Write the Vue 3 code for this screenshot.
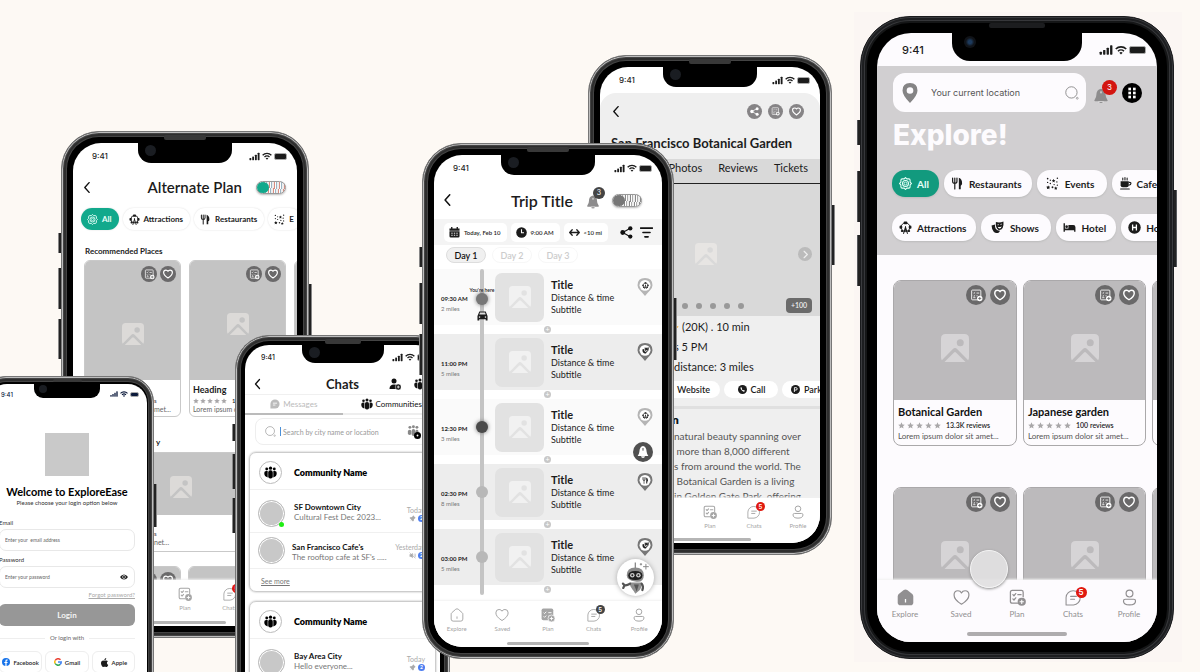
<script setup>
import { h } from 'vue'

const Icon = (props) =>
  h('svg', { viewBox: '0 0 24 24', 'aria-hidden': 'true' }, [h('use', { href: '#i-' + props.name })])
Icon.props = ['name']

const phones = [
  { id: 'alternate', nav: 'none', tone: 'red' },
  { id: 'chats' },
  { id: 'login' },
  { id: 'garden', nav: 'none', tone: 'red' },
  { id: 'trip', nav: 'Plan', tone: 'dark' },
  { id: 'explore', nav: 'Explore', tone: 'red' }
]

const navItems = [
  { label: 'Explore', icon: 'home' },
  { label: 'Saved', icon: 'heart' },
  { label: 'Plan', icon: 'plan' },
  { label: 'Chats', icon: 'chat', count: 5 },
  { label: 'Profile', icon: 'profile' }
]

const exploreChips = [
  [
    { label: 'All', icon: 'target', on: true },
    { label: 'Restaurants', icon: 'fork' },
    { label: 'Events', icon: 'events', roomy: true },
    { label: 'Cafe', icon: 'cup' }
  ],
  [
    { label: 'Attractions', icon: 'attraction' },
    { label: 'Shows', icon: 'masks', roomy: true },
    { label: 'Hotel', icon: 'bed' },
    { label: 'Ho', icon: 'hospital' }
  ]
]

const alternateChips = [
  { label: 'All', icon: 'target', on: true },
  { label: 'Attractions', icon: 'attraction' },
  { label: 'Restaurants', icon: 'fork' },
  { label: 'E', icon: 'events' }
]

const places = [
  { title: 'Botanical Garden', reviews: '13.3K reviews', text: 'Lorem ipsum dolor sit amet...' },
  { title: 'Japanese garden', reviews: '100 reviews', text: 'Lorem ipsum dolor sit amet...' },
  { title: '', reviews: '', text: '' }
]

const stops = [
  { time: '09:30 AM', miles: '2 miles', node: 'here', pin: 'attraction' },
  { time: '11:00 PM', miles: '5 miles', node: '', pin: 'masks', strong: true },
  { time: '12:30 PM', miles: '3 miles', node: 'dark', pin: 'attraction' },
  { time: '02:30 PM', miles: '8 miles', node: 'plain', pin: 'fork', strong: true },
  { time: '03:00 PM', miles: '5 miles', node: 'plain', pin: 'masks', strong: true }
]

const communities = [
  {
    more: true,
    rows: [
      { name: 'SF Downtown City', text: 'Cultural Fest Dec 2023...', when: 'Today', icon: 'pushpin', online: true },
      { name: "San Francisco Cafe's", text: "The rooftop cafe at SF's .....", when: 'Yesterday', icon: 'mute' }
    ]
  },
  { rows: [{ name: 'Bay Area City', text: 'Hello everyone...', when: 'Today', icon: 'pushpin' }] }
]

const about = [
  'natural beauty spanning over',
  ' more than 8,000 different',
  's from around the world. The',
  ' Botanical Garden is a living',
  'in Golden Gate Park, offering'
]
</script>

<template>
  <main class="canvas">
    <svg class="defs" aria-hidden="true">
      <symbol id="i-back" viewBox="0 0 24 24"><path d="M15 3L7 12l8 9" fill="none" stroke="currentColor" stroke-width="2.600" stroke-linecap="round" stroke-linejoin="round" /></symbol>
      <symbol id="i-next" viewBox="0 0 24 24"><path d="M9 5l7 7-7 7" fill="none" stroke="currentColor" stroke-width="2.6" stroke-linecap="round" stroke-linejoin="round" /></symbol>
      <symbol id="i-signal" viewBox="0 0 24 24"><g fill="currentColor"><rect x="1" y="15" width="4" height="5" rx="1" /><rect x="7" y="12" width="4" height="8" rx="1" /><rect x="13" y="8" width="4" height="12" rx="1" /><rect x="19" y="4" width="4" height="16" rx="1" /></g></symbol>
      <symbol id="i-wifi" viewBox="0 0 24 24"><g fill="none" stroke="currentColor" stroke-width="3.2"><path d="M1.500 10a15 15 0 0 1 21 0" /><path d="M6 14.500a8.500 8.500 0 0 1 12 0" /></g><path d="M12 21l-3.300-3.600a5 5 0 0 1 6.600 0z" fill="currentColor" /></symbol>
      <symbol id="i-target" viewBox="0 0 24 24"><g fill="none" stroke="currentColor" stroke-width="2"><path d="M12 1l2.500 2.500H18A2.500 2.500 0 0 1 20.500 6v3.500L23 12l-2.500 2.500V18a2.500 2.500 0 0 1-2.500 2.500h-3.500L12 23l-2.500-2.500H6A2.500 2.500 0 0 1 3.500 18v-3.500L1 12l2.500-2.500V6A2.500 2.500 0 0 1 6 3.500h3.500z" /><circle cx="12" cy="12" r="5.500" /></g><circle cx="12" cy="12" r="2.600" fill="none" stroke="currentColor" stroke-width="1.600" /></symbol>
      <symbol id="i-fork" viewBox="0 0 24 24"><path d="M3 2v6q0 4 4 4t4-4V2M7 2v20" fill="none" stroke="currentColor" stroke-width="2.200" stroke-linecap="round" /><path d="M14.500 1.500q6 2 6 10.500 0 3-2.500 4v6.500h-3.500z" fill="currentColor" /></symbol>
      <symbol id="i-events" viewBox="0 0 24 24"><g fill="currentColor"><path d="M14 3l1 2.500 2.500.3-2 1.700.6 2.500-2.100-1.300L12 10l.5-2.500-2-1.700 2.600-.3z" /><circle cx="3" cy="3" r="1.500" /><circle cx="8" cy="6" r="1.200" /><circle cx="21" cy="2.500" r="1.400" /><circle cx="3" cy="10" r="1.300" /><circle cx="8" cy="12" r="1.300" /><circle cx="20" cy="9" r="1.300" /><circle cx="15" cy="14" r="1.300" /><circle cx="21" cy="15" r="1.300" /><path d="M4 15.500l1.200 2.200 2.500.4-1.700 1.800.3 2.500L4 21.300l-2.300 1.100.3-2.500L.5 18.100l2.400-.4z" /><circle cx="12" cy="19" r="1.700" /><path d="M18 17.500l1 1.900 2.200.3-1.500 1.500.3 2.200-2-1-2 1 .4-2.200-1.600-1.500 2.200-.3z" /></g></symbol>
      <symbol id="i-cup" viewBox="0 0 24 24"><path d="M3 8h15v7q0 4-4 4H7q-4 0-4-4z" fill="currentColor" /><path d="M18 10q4-.5 4 2.200T18 15" fill="none" stroke="currentColor" stroke-width="2.200" /><path d="M3 22h16M7 2v3.500M11 1v4.500M15 2v3.500" stroke="currentColor" stroke-width="2" stroke-linecap="round" /></symbol>
      <symbol id="i-attraction" viewBox="0 0 24 24"><circle cx="12" cy="11.500" r="8" fill="none" stroke="currentColor" stroke-width="1.800" /><g fill="currentColor"><rect x="8.500" y="1" width="7" height="5" rx="2" /><rect x="1" y="8.500" width="5" height="6" rx="2" /><rect x="18" y="8.500" width="5" height="6" rx="2" /><rect x="3.500" y="16.500" width="4.500" height="4" rx="1.500" /><rect x="16" y="16.500" width="4.500" height="4" rx="1.500" /></g><path d="M12 11.500L8.500 23M12 11.500l3.500 11.500M12 10v3M10 18h4" fill="none" stroke="currentColor" stroke-width="1.900" stroke-linecap="round" /></symbol>
      <symbol id="i-masks" viewBox="0 0 24 24"><path d="M9 2q7 2 14-1 .8 8-1.500 12T14 16.500Q8 13 9 2z" fill="currentColor" /><path d="M7.500 6.500L1 8.500q.5 8 4 11.500t9 1.500q2-1.500 2.600-3.500Q6 17 7.500 6.500z" fill="currentColor" /><path d="M12 7l2.500-.3M17.500 6.500l2.500-.8" stroke="#fff" stroke-width="1.400" /><path d="M12.500 10.500q3.500 2 7-1-.5 4-3.500 4.200t-3.500-3.200z" fill="#fff" /></symbol>
      <symbol id="i-bed" viewBox="0 0 24 24"><path d="M1 4h2.600v10H10V7.500h9q4 0 4 4V20h-2.500v-3h-17v3H1z" fill="currentColor" /><circle cx="6.700" cy="10.500" r="2.500" fill="currentColor" /></symbol>
      <symbol id="i-hospital" viewBox="0 0 24 24"><circle cx="12" cy="12" r="11.500" fill="currentColor" /><path d="M8.500 6.500v11M15.500 6.500v11M8.500 12h7" stroke="#fff" stroke-width="2.400" /></symbol>
      <symbol id="i-plan" viewBox="0 0 24 24"><g fill="none" stroke="currentColor" stroke-width="1.800" stroke-linecap="round" stroke-linejoin="round"><path d="M12 20H4.500Q2 20 2 17.500v-13Q2 2 4.500 2h13Q20 2 20 4.500V11" /><path d="M5.500 8l1.500 1.500L9.500 6.500M12.500 8H17M5.500 14L7 15.500l2.500-3" /></g><circle cx="18" cy="18" r="5.800" fill="currentColor" /><path d="M18 15v6M15 18h6" stroke="#fff" stroke-width="1.500" /></symbol>
      <symbol id="i-plan-on" viewBox="0 0 24 24"><rect x="1" y="1" width="20" height="20" rx="3" fill="currentColor" /><path d="M4.500 8L6 9.500l3-3M12.500 8H18M4.500 14.500L6 16l3-3M12.500 14H15" fill="none" stroke="#fff" stroke-width="1.600" /><circle cx="18" cy="18" r="6" fill="currentColor" stroke="#fff" stroke-width="1.200" /><path d="M18 15v6M15 18h6" stroke="#fff" stroke-width="1.500" /></symbol>
      <symbol id="i-plan-add" viewBox="0 0 24 24"><rect x="3" y="2" width="17" height="18" rx="1.500" fill="none" stroke="currentColor" stroke-width="1.600" /><path d="M6 7l1.200 1.200L9.500 6M12 7.500h5M6 12.500l1.200 1.200 2.300-2.200M12 12.500h2M6 16h4" fill="none" stroke="currentColor" stroke-width="1.500" /><circle cx="18" cy="17.500" r="5" fill="currentColor" /><path d="M18 14.700v5.600M15.200 17.500h5.600" stroke="#666" stroke-width="1.500" /></symbol>
      <symbol id="i-heart" viewBox="0 0 24 24"><path d="M12 21.500Q1.500 15 1.500 8.300 1.500 2.500 7 2.500q3.500 0 5 3 1.500-3 5-3 5.500 0 5.500 5.800Q22.500 15 12 21.500z" fill="none" stroke="currentColor" stroke-width="1.700" stroke-linejoin="round" /></symbol>
      <symbol id="i-heart-b" viewBox="0 0 24 24"><path d="M12 21.500Q1.500 15 1.500 8.300 1.500 2.500 7 2.500q3.500 0 5 3 1.500-3 5-3 5.500 0 5.500 5.800Q22.500 15 12 21.500z" fill="none" stroke="currentColor" stroke-width="2.800" stroke-linejoin="round" /></symbol>
      <symbol id="i-home" viewBox="0 0 24 24"><path d="M2 10.500Q2 9 3.200 8l6.600-5.800q2.200-1.700 4.400 0L20.800 8Q22 9 22 10.500V19q0 3.500-3.500 3.500h-13Q2 22.500 2 19z" fill="none" stroke="currentColor" stroke-width="1.600" /><path d="M12 14.500v4" stroke="currentColor" stroke-width="1.600" /></symbol>
      <symbol id="i-home-on" viewBox="0 0 24 24"><path d="M1 10.500Q1 8.500 2.500 7.200l7-5.700q2.500-1.800 5 0l7 5.700Q23 8.500 23 10.500V19q0 4-4 4H5q-4 0-4-4z" fill="currentColor" /><path d="M12 14v5" stroke="#fff" stroke-width="1.800" /></symbol>
      <symbol id="i-chat" viewBox="0 0 24 24"><path d="M1.500 22.500V12A10 10 0 1 1 12 22.500z" fill="none" stroke="currentColor" stroke-width="1.500" stroke-linejoin="round" /><path d="M8 10.500h8M8 14.500h5.500" stroke="currentColor" stroke-width="1.600" stroke-linecap="round" /></symbol>
      <symbol id="i-chat-on" viewBox="0 0 24 24"><path d="M1 23V12A11 11 0 1 1 12 23z" fill="currentColor" /><path d="M7 10h10M7 14.500h6" stroke="#fff" stroke-width="2" /></symbol>
      <symbol id="i-profile" viewBox="0 0 24 24"><g fill="none" stroke="currentColor" stroke-width="1.700"><circle cx="12" cy="6.500" r="4.800" /><path d="M6 14.500h12q2.500 0 2.500 2.300 0 5.700-8.500 5.700t-8.500-5.700q0-2.300 2.500-2.300z" /></g></symbol>
      <symbol id="i-image" viewBox="0 0 24 24"><path d="M4 0h16q4 0 4 4v16q0 1.500-.7 2.500L14 13q-2-2-4 0L.7 22.500Q0 21.500 0 20V4Q0 0 4 0z" fill="currentColor" /><path d="M3 24l8-8q1-1 2 0l8 8z" fill="currentColor" /><circle class="sun" cx="16.500" cy="7.500" r="3" /></symbol>
      <symbol id="i-marker" viewBox="0 0 24 24"><path d="M12 0Q3 0 3 9q0 6 9 15 9-9 9-15 0-9-9-9zm0 5a4 4 0 1 1 0 8 4 4 0 0 1 0-8z" fill="currentColor" fill-rule="evenodd" /></symbol>
      <symbol id="i-pin" viewBox="0 0 24 24"><path d="M12 24q-3-4-6.500-7.500Q2 13.500 2 9.800 2 0 12 0t10 9.800q0 3.700-3.500 6.700Q15 20 12 24z" fill="currentColor" /><circle cx="12" cy="9.800" r="7.300" fill="#fff" /></symbol>
      <symbol id="i-bell" viewBox="0 0 24 24"><path d="M12 1q7 1.500 7 9.500 0 4 2.500 7 1.500 2-.5 2.500H3q-2-.5-.5-2.500 2.500-3 2.500-7Q5 2.500 12 1z" fill="currentColor" /><path d="M8.500 20.500h7q-.5 3-3.500 3t-3.500-3z" fill="currentColor" stroke="#fff" stroke-width=".7" /><path d="M12 5v3" stroke="#fff" stroke-width="1.400" /></symbol>
      <symbol id="i-search" viewBox="0 0 24 24"><circle cx="11" cy="11" r="9.700" fill="none" stroke="currentColor" stroke-width="1.500" /><circle cx="21" cy="21" r="1.600" fill="none" stroke="currentColor" stroke-width="1.200" /></symbol>
      <symbol id="i-dots" viewBox="0 0 24 24"><g fill="#fff"><rect x="6.500" y="4" width="4" height="4" /><rect x="13.500" y="4" width="4" height="4" /><rect x="6.500" y="10" width="4" height="4" /><rect x="13.500" y="10" width="4" height="4" /><rect x="6.500" y="16" width="4" height="4" /><rect x="13.500" y="16" width="4" height="4" /></g></symbol>
      <symbol id="i-calendar" viewBox="0 0 24 24"><path d="M6 0v5M18 0v5" stroke="currentColor" stroke-width="3" /><path d="M1 3h22v5H1zM1 9.500h22V20q0 3-3 3H4q-3 0-3-3z" fill="currentColor" /><path d="M5 13.500h3M10.500 13.500h3M16 13.500h3M5 18h3M10.500 18h3M16 18h3" stroke="#fff" stroke-width="2" /></symbol>
      <symbol id="i-clock" viewBox="0 0 24 24"><circle cx="12" cy="12" r="11.500" fill="currentColor" /><path d="M12 5v7.500h5.500" fill="none" stroke="#fff" stroke-width="2.400" /></symbol>
      <symbol id="i-range" viewBox="0 0 24 24"><path d="M7 6l-5.500 6L7 18M17 6l5.500 6-5.500 6M2 12h20" fill="none" stroke="currentColor" stroke-width="2.800" stroke-linecap="round" stroke-linejoin="round" /></symbol>
      <symbol id="i-share" viewBox="0 0 24 24"><path d="M19 4L5 12l14 8" fill="none" stroke="currentColor" stroke-width="2" /><g fill="currentColor"><circle cx="19" cy="4.500" r="4" /><circle cx="5" cy="12" r="4.400" /><circle cx="19" cy="19.500" r="4" /></g></symbol>
      <symbol id="i-filter" viewBox="0 0 24 24"><path d="M1 4h22M5.500 12h13M9 20h6" stroke="currentColor" stroke-width="3" stroke-linecap="round" /></symbol>
      <symbol id="i-car" viewBox="0 0 24 24"><path d="M5 3h14l3 8 1 2v10h-4v-3H5v3H1V13l1-2z" fill="currentColor" /><path d="M6.500 5.500h11L19 10H5z" fill="#ddd" /><circle cx="5.500" cy="15.500" r="1.700" fill="#ddd" /><circle cx="18.500" cy="15.500" r="1.700" fill="#ddd" /></symbol>
      <symbol id="i-user-add" viewBox="0 0 24 24"><g fill="currentColor"><circle cx="10" cy="6" r="5" /><path d="M1 22q0-9 9-9t9 9z" /><circle cx="18.500" cy="18" r="6" stroke="#fff" /></g><path d="M18.500 15v6M15.500 18h6" stroke="#fff" stroke-width="1.600" /></symbol>
      <symbol id="i-group" viewBox="0 0 24 24"><g fill="currentColor"><circle cx="12" cy="4" r="3" /><circle cx="5" cy="5.500" r="2.600" /><circle cx="19" cy="5.500" r="2.600" /><rect x="7.800" y="8" width="8.400" height="15" rx="3.800" /><path d="M6.800 9v12Q.5 20 .5 13q0-4 3.500-4zM17.200 9v12q6.300-1 6.300-8 0-4-3.500-4z" /></g></symbol>
      <symbol id="i-group-add" viewBox="0 0 24 24"><g fill="#888"><circle cx="5" cy="4" r="2.500" /><circle cx="11" cy="3" r="2.500" /><circle cx="17" cy="4" r="2.500" /><rect x="1.500" y="8" width="6" height="9" rx="3" /><rect x="8" y="7" width="6" height="12" rx="3" /><rect x="14.500" y="8" width="5" height="8" rx="2.500" /></g><circle cx="18" cy="18" r="6" fill="#000" /><circle cx="18" cy="18" r="1.600" fill="#fff" /></symbol>
      <symbol id="i-pushpin" viewBox="0 0 24 24"><path d="M14 1l9 9-2.500 1-4 4.500V20l-3 2-5-5-6.500 6 6-6.500-6-6 2-2.500h4.500l4.500-4z" fill="currentColor" /></symbol>
      <symbol id="i-mute" viewBox="0 0 24 24"><path d="M2 8h5l6-5v18l-6-5H2z" fill="currentColor" /><path d="M2 2l20 20M17 8q2 4 0 8M20.500 5q4 7 0 14" fill="none" stroke="currentColor" stroke-width="2" /></symbol>
      <symbol id="i-eye" viewBox="0 0 24 24"><path d="M0 12Q5 4.500 12 4.500T24 12q-5 7.500-12 7.500T0 12zm12-5a5 5 0 1 0 0 10 5 5 0 0 0 0-10z" fill="currentColor" fill-rule="evenodd" /><circle cx="12" cy="12" r="3.200" fill="currentColor" /></symbol>
      <symbol id="i-facebook" viewBox="0 0 24 24"><circle cx="12" cy="12" r="12" fill="#1773ea" /><path d="M16.500 15.300l.5-3.500h-3.300V9.600q0-1.800 1.900-1.800h1.500v-3q-7-1.500-7 4v3H7v3.500h3.100V24h3.600v-8.700z" fill="#fff" /></symbol>
      <symbol id="i-google" viewBox="0 0 24 24"><g fill="none" stroke-width="4.600"><path d="M19.500 5.500A9.700 9.700 0 0 0 3.500 7.500" stroke="#ea4335" /><path d="M3.500 7.500a9.700 9.700 0 0 0 0 9" stroke="#fbbc05" /><path d="M3.500 16.500a9.700 9.700 0 0 0 15 2.500" stroke="#34a853" /><path d="M12 12h9.700q0 4.500-3.200 7" stroke="#4285f4" /></g></symbol>
      <symbol id="i-apple" viewBox="0 0 24 24"><path d="M16.500 0q.3 3-1.500 4.700T11.500 6.300Q11.300 4 13 2.200T16.500 0zM12 7.500q1-.2 2.600-.9 4.300-1 6.600 2.200-3.400 2-2.700 5.500.6 3 3.500 4.200-1.200 3-3 4.800-1.800 1.200-4 .2t-4.500 0q-2.300 1-3.800-.5Q2.500 18.500 2.500 13q.4-6 5.500-6.500 1.500 0 4 1z" fill="currentColor" /></symbol>
      <symbol id="i-phone" viewBox="0 0 24 24"><circle cx="12" cy="12" r="12" fill="currentColor" /><path d="M6.500 7l2-1.500L11 9l-1.200 1.500q1.200 2.500 3.700 3.700L15 13l3.500 2.500-1.500 2q-2 1-6-2T6.500 7z" fill="#fff" /></symbol>
      <symbol id="i-parking" viewBox="0 0 24 24"><circle cx="12" cy="12" r="12" fill="currentColor" /><path d="M9 18.500V7h4q3.500 0 3.500 3.300T13 13.500H9" fill="none" stroke="#fff" stroke-width="2.400" /></symbol>
      <symbol id="i-star" viewBox="0 0 24 24"><path d="M12 1l3.300 7.200 7.900.9-5.900 5.300 1.600 7.800L12 18.300l-6.900 3.900 1.600-7.800L.8 9.100l7.900-.9z" fill="currentColor" /></symbol>
      <symbol id="i-alarm" viewBox="0 0 24 24"><path d="M12 3q5 1 5.500 9 .5 3.500 2.500 6H4q2-2.500 2.500-6Q7 4 12 3z" fill="#fff" /><path d="M9 18.500h6q-.5 2.500-3 2.500t-3-2.500z" fill="#fff" /><path d="M12 6v4" stroke="#333" stroke-width="1.300" /></symbol>
      <symbol id="i-robot" viewBox="0 0 24 24"><path d="M11.500 1v4" stroke="#777" stroke-width=".8" /><path d="M19 2v4M17 4h4M15.500 1.500v1.600M14.700 2.300h1.600" stroke="#888" stroke-width=".7" /><path d="M5.500 10q0-5.500 6-5.500t6 5.500-6 4.500-6-4.500z" fill="#8a8a8a" /><path d="M6.500 10.200q0-3.200 5-3.200t5 3.200-5 3.200-5-3.200z" fill="#1f1f1f" /><circle cx="9.400" cy="10" r="1.600" fill="#ccc" /><circle cx="13.700" cy="10" r="1.600" fill="#ccc" /><circle cx="9.400" cy="10" r=".7" fill="#222" /><circle cx="13.700" cy="10" r=".7" fill="#222" /><path d="M7.500 15.200h8.500q0 4-1.500 5.500l-3 2.500q-1-2-2-3-2-2-2-5z" fill="#8f8f8f" /><path d="M10.500 16.500h3.500l-1.500 5z" fill="#555" /><path d="M7.800 16q-2.500 1.500-4 1l-1-1M4 17l-1 2M16 16q1.500 2 .5 4.500" stroke="#555" stroke-width="1.600" stroke-linecap="round" fill="none" /></symbol>
    </svg>

    <div class="shade"></div>

    <article v-for="p in phones" :key="p.id" :class="['phone', p.id]">
      <i v-for="k in ['a', 'b', 'c', 'd']" :key="k" :class="['key', k]"></i>
      <i class="speaker"></i>
      <div class="notch"><i class="lens"></i></div>
      <section class="screen">
        <header class="status">
          <time>9:41</time>
          <span class="signals"><Icon name="signal" /><Icon name="wifi" /><i class="battery"></i></span>
        </header>

        <div v-if="p.id === 'explore'" class="body">
          <div class="hero">
            <div class="searchbar">
              <label class="field">
                <Icon name="marker" class="s20" />
                <input type="text" placeholder="Your current location" aria-label="Your current location" />
                <Icon name="search" class="s14" />
              </label>
              <button class="bell" aria-label="Notifications"><Icon name="bell" class="s16" /><b>3</b></button>
              <button class="apps" aria-label="Menu"><Icon name="dots" class="s16" /></button>
            </div>
            <h1>Explore!</h1>
            <div v-for="(row, r) in exploreChips" :key="r" class="chips">
              <button v-for="c in row" :key="c.label" :class="['chip', { on: c.on, roomy: c.roomy }]"><Icon :name="c.icon" class="s13" />{{ c.label }}</button>
            </div>
          </div>
          <div class="feed">
            <div v-for="n in 2" :key="n" class="cards">
              <article v-for="(c, i) in places" :key="i" class="card">
                <div class="photo">
                  <span class="acts"><button aria-label="Add to plan"><Icon name="plan-add" class="s13" /></button><button aria-label="Save"><Icon name="heart-b" class="s12" /></button></span>
                  <Icon name="image" class="s28" />
                </div>
                <div v-if="n === 1 && c.title" class="info">
                  <h2>{{ c.title }}</h2>
                  <p class="rate"><Icon v-for="s in 5" :key="s" name="star" class="s7" /><span>{{ c.reviews }}</span></p>
                  <p class="text">{{ c.text }}</p>
                </div>
              </article>
            </div>
          </div>
          <i class="touch"></i>
        </div>

        <div v-else-if="p.id === 'trip'" class="body">
          <div class="head">
            <button class="plain" aria-label="Back"><Icon name="back" class="s14" /></button>
            <h1>Trip Title</h1>
            <button class="bell" aria-label="Notifications"><Icon name="bell" class="s14" /><b>3</b></button>
            <input type="checkbox" class="toggle" aria-label="Alternate plan" />
          </div>
          <div class="filters">
            <button class="pill"><Icon name="calendar" class="s11" />Today, Feb 10</button>
            <button class="pill"><Icon name="clock" class="s11" />9:00 AM</button>
            <button class="pill"><Icon name="range" class="s11" />&lt;10 mi</button>
            <button class="plain push" aria-label="Share"><Icon name="share" class="s13" /></button>
            <button class="plain" aria-label="Filter"><Icon name="filter" class="s13" /></button>
          </div>
          <div class="days">
            <button class="on">Day 1</button><button>Day 2</button><button>Day 3</button>
          </div>
          <ol class="stops">
            <li v-for="(s, i) in stops" :key="i">
              <div :class="['stop', { alt: s.strong }]">
                <div class="when"><b>{{ s.time }}</b><span>{{ s.miles }}</span></div>
                <div :class="['rail', s.node]">
                  <em v-if="s.node === 'here'">You're here</em>
                  <i v-if="s.node" :class="['node', s.node]"></i>
                  <Icon v-if="s.node === 'here'" name="car" class="s11 car" />
                </div>
                <div class="thumb"><Icon name="image" class="s22" /></div>
                <div class="what"><h2>Title</h2><p>Distance &amp; time</p><p>Subtitle</p></div>
                <div :class="['pin', { strong: s.strong }]"><Icon name="pin" class="drop" /><Icon :name="s.pin" class="s7" /></div>
              </div>
              <button class="plus" aria-label="Add a stop">+</button>
            </li>
          </ol>
          <button class="alarm" aria-label="Alarm"><Icon name="alarm" class="s16" /></button>
          <button class="robot" aria-label="Assistant"><Icon name="robot" class="s34" /></button>
        </div>

        <div v-else-if="p.id === 'garden'" class="body">
          <div class="top">
            <div class="bar">
              <button class="plain" aria-label="Back"><Icon name="back" class="s13" /></button>
              <span class="acts"><button aria-label="Share"><Icon name="share" class="s9" /></button><button aria-label="Add to plan"><Icon name="plan-add" class="s9" /></button><button aria-label="Save"><Icon name="heart-b" class="s9" /></button></span>
            </div>
            <h1>San Francisco Botanical Garden</h1>
          </div>
          <div class="tabs"><a href="#">Photos</a><a href="#">Reviews</a><a href="#">Tickets</a></div>
          <div class="gallery">
            <Icon name="image" class="s22" />
            <button class="arrow" aria-label="Next photo"><Icon name="next" class="s11" /></button>
            <span class="dots"><i v-for="d in 5" :key="d"></i></span>
            <b>+100</b>
          </div>
          <div class="facts">
            <p><Icon name="star" class="s9 gold" />(20K) . 10 min</p>
            <p>s 5 PM</p>
            <p>distance: 3 miles</p>
          </div>
          <div class="links">
            <button>Website</button><button><Icon name="phone" class="s9" />Call</button><button><Icon name="parking" class="s9" />Parki</button>
          </div>
          <div class="about">
            <h2>n</h2>
            <p v-for="l in about" :key="l">{{ l }}</p>
          </div>
        </div>

        <div v-else-if="p.id === 'alternate'" class="body">
          <div class="head">
            <button class="plain" aria-label="Back"><Icon name="back" class="s13" /></button>
            <h1>Alternate Plan</h1>
            <input type="checkbox" class="toggle green" aria-label="Alternate plan" />
          </div>
          <div class="chips">
            <button v-for="c in alternateChips" :key="c.label" :class="['chip', { on: c.on }]"><Icon :name="c.icon" class="s11" />{{ c.label }}</button>
          </div>
          <h3>Recommended Places</h3>
          <div class="cards">
            <article v-for="n in 3" :key="n" class="card">
              <div class="photo">
                <span v-if="n < 3" class="acts"><button aria-label="Add to plan"><Icon name="plan-add" class="s11" /></button><button aria-label="Save"><Icon name="heart-b" class="s10" /></button></span>
                <Icon name="image" class="s22" />
              </div>
              <div class="info">
                <template v-if="n === 1"><p class="rate tail">s</p><p class="text tail">met...</p></template>
                <template v-else-if="n === 2">
                  <h2>Heading</h2>
                  <p class="rate"><Icon v-for="s in 5" :key="s" name="star" class="s6" /><span>10</span></p>
                  <p class="text">Lorem ipsum do</p>
                </template>
              </div>
            </article>
          </div>
          <h3 class="tail">y</h3>
          <article class="wide">
            <div class="photo"><Icon name="image" class="s22" /></div>
            <div class="info"><p class="rate tail">s</p><p class="text tail">net...</p></div>
          </article>
          <div class="cards last">
            <article v-for="n in 2" :key="n" class="card"><div class="photo"><span v-if="n === 1" class="acts"><button aria-label="Add to plan"></button><button aria-label="Save"><Icon name="heart-b" class="s10" /></button></span></div></article>
          </div>
        </div>

        <div v-else-if="p.id === 'chats'" class="body">
          <div class="head">
            <button class="plain" aria-label="Back"><Icon name="back" class="s12" /></button>
            <h1>Chats</h1>
            <button class="plain" aria-label="Add a friend"><Icon name="user-add" class="s12" /></button>
            <button class="plain" aria-label="Groups"><Icon name="group" class="s12" /></button>
          </div>
          <div class="switch">
            <button><Icon name="chat-on" class="s10" />Messages</button>
            <button class="on"><Icon name="group" class="s12" />Communities</button>
          </div>
          <label class="find">
            <Icon name="search" class="s11" />
            <input type="text" placeholder="Search by city name or location" aria-label="Search by city name or location" />
            <Icon name="group-add" class="s14" />
          </label>
          <section v-for="(c, i) in communities" :key="i" class="group">
            <header><span class="ring"><Icon name="group" class="s13" /></span><h2>Community Name</h2></header>
            <div v-for="r in c.rows" :key="r.name" class="row">
              <span :class="['face', { online: r.online }]"></span>
              <div class="msg"><h3>{{ r.name }}</h3><p>{{ r.text }}</p></div>
              <div class="meta"><span>{{ r.when }}</span><span><Icon :name="r.icon" class="s7" /><b>2</b></span></div>
            </div>
            <a v-if="c.more" href="#">See more</a>
          </section>
        </div>

        <form v-else class="body">
          <div class="logo"></div>
          <h1>Welcome to ExploreEase</h1>
          <p class="sub">Please choose your login option below</p>
          <label for="mail">Email</label>
          <span class="box"><input id="mail" type="email" placeholder="Enter your  email address" /></span>
          <label for="pass">Password</label>
          <span class="box"><input id="pass" type="password" placeholder="Enter your password" /><Icon name="eye" class="s8" /></span>
          <a href="#">Forgot password?</a>
          <button type="button" class="go">Login</button>
          <div class="or">Or login with</div>
          <div class="social">
            <button type="button"><Icon name="facebook" class="s8" />Facebook</button>
            <button type="button"><Icon name="google" class="s8" />Gmail</button>
            <button type="button"><Icon name="apple" class="s9" />Apple</button>
          </div>
        </form>

        <nav v-if="p.nav" :class="p.tone">
          <a v-for="n in navItems" :key="n.label" href="#" :class="{ on: n.label === p.nav }">
            <span><Icon :name="n.label === p.nav ? n.icon + '-on' : n.icon" /><b v-if="n.count">{{ n.count }}</b></span>{{ n.label }}
          </a>
          <i class="grip"></i>
        </nav>
      </section>
    </article>
  </main>
</template>

<style>
html,
body {
  margin: 0;
  background: #fdf9f4;
}
</style>

<style scoped>
* { box-sizing: border-box; margin: 0; padding: 0; }
.canvas {
  position: relative;
  min-height: 100vh;
  overflow: hidden;
  background: #fdf9f4;
  color: #1c1c1c;
  font-family: Lato, "Liberation Sans", sans-serif;
}
.defs { position: absolute; width: 0; height: 0; }
svg { display: block; flex: none; }
button { border: 0; background: none; font: inherit; color: inherit; display: flex; align-items: center; justify-content: center; white-space: nowrap; flex: none; }
input { border: 0; background: none; font: inherit; color: inherit; min-width: 0; outline: 0; }
a { color: inherit; text-decoration: none; }
.s6 { width: 6px; height: 6px; }
.s7 { width: 7px; height: 7px; }
.s8 { width: 8px; height: 8px; }
.s9 { width: 9px; height: 9px; }
.s10 { width: 10px; height: 10px; }
.s11 { width: 11px; height: 11px; }
.s12 { width: 12px; height: 12px; }
.s13 { width: 13px; height: 13px; }
.s14 { width: 14px; height: 14px; }
.s16 { width: 16px; height: 16px; }
.s20 { width: 20px; height: 20px; }
.s22 { width: 22px; height: 22px; }
.s28 { width: 28px; height: 28px; }
.s34 { width: 34px; height: 34px; }

.shade { position: absolute; left: 854px; top: 12px; width: 328px; height: 650px; background: #fbf6f3; }

/* device frames */
.phone {
  position: absolute;
  padding: 11px;
  border: 1px solid #777;
  background: #000;
  box-shadow: inset 0 0 0 1px #bdbdbd, inset 0 0 0 2px #444, inset 0 0 0 4px #2e2e2e, inset 0 0 0 5px #444;
}
.alternate { left: 61px; top: 131px; width: 248px; height: 507px; border-radius: 38px; }
.chats { left: 235px; top: 335px; width: 215px; height: 440px; border-radius: 34px; padding: 9px; }
.login { left: -20px; top: 376px; width: 174px; height: 360px; border-radius: 26px; padding: 7px 6px 7px 7px; }
.garden { left: 588px; top: 55px; width: 244px; height: 500px; border-radius: 38px; }
.trip { left: 422px; top: 143px; width: 252px; height: 516px; border-radius: 39px; }
.explore {
  left: 860px; top: 16px; width: 314px; height: 643px; border-radius: 50px; padding: 16px; border-color: #1a1b1d;
  box-shadow: inset 0 0 0 1px #3a3b3e, inset 0 0 0 3px #1d1e20, inset 0 0 0 4px #36373a, inset 0 0 0 6px #151617;
}
.screen { position: relative; height: 100%; background: #fff; border-radius: 28px; overflow: hidden; display: flex; flex-direction: column; }
.chats .screen { border-radius: 24px; }
.login .screen { border-radius: 19px; }
.explore .screen { border-radius: 34px; background: #fdfbfe; }
.key { position: absolute; left: -4px; width: 3px; background: #222; border-left: 1px solid #888; }
.key.a { top: 20%; height: 4%; }
.key.b { top: 27%; height: 8%; }
.key.c { top: 37%; height: 8%; }
.key.d { left: auto; right: -4px; top: 30%; height: 12%; border: 0; border-right: 1px solid #888; }
.explore .key { border-color: #55575a; }
.explore .key.a { top: 16%; }
.explore .key.b { top: 24%; }
.explore .key.c { top: 34%; }
.explore .key.d { top: 27%; }
.notch { position: absolute; z-index: 2; left: 50%; top: 11px; width: 94px; margin-left: -47px; height: 20px; background: #000; border-radius: 0 0 13px 13px; }
.speaker { position: absolute; z-index: 3; left: 50%; top: 3px; width: 42px; height: 5px; margin-left: -21px; background: #383838; border-radius: 2px; }
.lens { position: absolute; left: 7px; top: 2px; width: 11px; height: 11px; border-radius: 50%; background: #1a1d22; }
.chats .notch { top: 9px; width: 82px; margin-left: -41px; height: 18px; }
.chats .speaker { width: 36px; margin-left: -18px; }
.login .notch { top: 6px; width: 66px; margin-left: -33px; height: 15px; border-radius: 0 0 9px 9px; }
.login .speaker { width: 29px; margin-left: -14px; top: 2px; height: 3px; }
.login .lens { left: 5px; top: 2px; width: 8px; height: 8px; }
.explore .notch { top: 15px; width: 130px; margin-left: -65px; height: 29px; border-radius: 0 0 18px 18px; }
.explore .speaker { top: 6px; width: 56px; margin-left: -28px; background: #1c1d1f; }
.explore .lens { left: 12px; top: 4px; width: 12px; height: 12px; background: radial-gradient(circle, #1d3a5c 20%, #101318 50%); }

.status { flex: none; height: 26px; padding: 0 10px 0 19px; display: flex; align-items: center; justify-content: space-between; font-family: Inter, sans-serif; font-size: 8px; font-weight: 500; }
.signals { display: flex; align-items: center; gap: 2px; }
.signals svg { width: 11px; height: 11px; }
.signals svg + svg { width: 10px; height: 10px; }
.battery { width: 13px; height: 7px; border-radius: 2px; background: #1c1c1c; border: 1px solid #aaa; }
.chats .status { height: 24px; padding: 0 10px 0 16px; font-size: 7px; }
.login .status { height: 20px; padding: 0 8px 0 13px; font-size: 6px; color: #0c1a3c; }
.login .signals svg { width: 8px; height: 8px; }
.login .battery { width: 9px; height: 5px; background: #0c1a3c; }
.explore .status { height: 33px; padding: 0 11px 0 25px; font-size: 11px; }
.explore .signals svg { width: 14px; height: 14px; }
.explore .signals svg + svg { width: 12px; height: 12px; }
.explore .battery { width: 17px; height: 8px; }
.body { flex: 1; min-height: 0; overflow: hidden; display: flex; flex-direction: column; }
.body > * { flex: none; }

/* bottom navigation */
nav { flex: none; position: relative; height: 46px; padding-top: 7px; display: grid; grid-template-columns: repeat(5, 1fr); align-items: start; background: #fff; color: #a5a5a5; font-size: 6px; line-height: 10px; box-shadow: 0 -1px 2px #f1f1f1; }
nav a { display: flex; flex-direction: column; align-items: center; gap: 2px; }
nav span { position: relative; }
nav span svg { width: 14px; height: 14px; }
nav b { position: absolute; left: 9px; top: -3px; width: 9px; height: 9px; border-radius: 50%; background: #e0190f; color: #fff; font: 600 6px/9px Inter, sans-serif; text-align: center; }
nav.dark b { background: #444; }
.grip { position: absolute; bottom: 2px; left: 50%; width: 82px; margin-left: -41px; height: 3px; border-radius: 2px; background: #b5b5b5; }
.garden nav { height: 45px; }
.explore nav { height: 62px; padding-top: 9px; background: #fdfbfe; font-size: 8px; line-height: 12px; color: #918f91; }
.explore nav a { gap: 2px; }
.explore nav span svg { width: 17px; height: 17px; }
.explore nav b { left: 11px; top: -2px; width: 11px; height: 11px; font-size: 8px; line-height: 11px; }
.explore .grip { bottom: 6px; width: 100px; margin-left: -50px; height: 4px; background: #aeacae; }

/* shared pieces */
.chips { display: flex; gap: 5px; }
.chip { height: 27px; padding: 0 10px 0 7px; gap: 5px; border-radius: 13px; background: #fdfbfe; font-size: 10px; font-weight: 700; box-shadow: 0 1px 2px #bbb; }
.chip.on { background: #129a7e; color: #e8fff8; }
.chip.roomy { min-width: 70px; gap: 6px; }
.acts { display: flex; gap: 4px; }
.acts button { border-radius: 50%; background: #6a696a; color: #fff; }
.photo { display: flex; flex-direction: column; align-items: center; position: relative; }
.photo > svg { color: #d6d4d6; fill: #bcbabc; }
.rate { display: flex; align-items: center; color: #a9a7a9; }
.rate span { color: #1c1c1c; font-weight: 600; }
.bell { position: relative; color: #8d8c8d; }
.bell b { position: absolute; border-radius: 50%; color: #fff; text-align: center; font-weight: 400; font-family: Inter, sans-serif; }
.plain { color: #111; }
.toggle { appearance: none; width: 30px; height: 13px; border-radius: 7px; border: 1px solid #999; box-shadow: 0 1px 2px #bbb; background: repeating-linear-gradient(95deg, #eee 0 2px, #888 2px 3px, #fff 3px 4px, #aaa 4px 5px); }
.toggle::before { content: ""; display: block; width: 12px; height: 11px; border-radius: 50%; background: #777; }
.toggle.green { background: repeating-linear-gradient(95deg, #eee 0 2px, #d98c80 2px 3px, #fff 3px 4px, #9bb5c4 4px 5px); }
.toggle.green::before { background: #12a98c; }

/* explore */
.hero { height: 189px; padding: 7px 0 0 16px; background: #d1cfd1; }
.searchbar { display: flex; align-items: center; }
.field { width: 193px; height: 39px; border-radius: 12px; background: #fdfbfe; display: flex; align-items: center; padding: 0 7px; color: #858485; }
.field input { flex: 1; margin-left: 11px; font: 400 9px Inter, sans-serif; }
.field input::placeholder { color: #555; opacity: 1; }
.explore .bell { margin: 6px 0 0 7px; }
.explore .bell b { left: 9px; top: -8px; width: 15px; height: 15px; background: #d31510; font-size: 8px; line-height: 15px; }
.apps { width: 20px; height: 20px; border-radius: 50%; background: #000; margin-left: 13px; }
.hero h1 { font: 800 28px/46px Inter, sans-serif; color: #fdfbfe; margin-bottom: 12px; }
.hero .chips { margin: 0 0 17px -1px; }
.feed { padding: 25px 0 0 16px; }
.explore .cards { display: flex; gap: 6px; margin-bottom: 41px; }
.explore .card { width: 124px; height: 166px; border: 1px solid #aaa8aa; border-radius: 8px; overflow: hidden; flex: none; }
.explore .card + .card { width: 123px; }
.explore .photo { height: 119px; background: #bcbabc; padding-top: 4px; gap: 29px; }
.explore .photo .acts { align-self: flex-end; margin-right: 6px; }
.explore .acts button { width: 20px; height: 20px; }
.explore .info { padding: 5px 4px; }
.explore .info h2 { font-size: 11px; line-height: 14px; height: 14px; font-weight: 700; color: #111; }
.explore .rate { gap: 2px; height: 12px; font-size: 7px; }
.explore .rate span { margin-left: 3px; font-weight: 600; }
.explore .text { font-size: 8px; line-height: 10px; color: #555; white-space: nowrap; }
.touch { position: absolute; z-index: 3; left: 93px; top: 517px; width: 38px; height: 38px; border-radius: 50%; background: rgba(225, 223, 225, .92); border: 1px solid #f4f4f4; box-shadow: 0 1px 3px #888; }

/* trip */
.head { display: flex; align-items: center; }
.trip .head { height: 38px; padding: 0 20px 0 7px; }
.trip h1 { flex: 1; text-align: right; font-size: 16px; font-weight: 600; }
.trip .head .bell { margin: 4px 0 0 13px; }
.trip .bell b { left: 7px; top: -8px; width: 12px; height: 12px; background: #444; font-size: 7px; line-height: 12px; }
.trip .toggle { margin-left: 12px; }
.filters { height: 26px; background: #f4f4f4; display: flex; align-items: center; gap: 4px; padding: 0 9px 0 10px; }
.pill { height: 19px; border-radius: 5px; background: #fff; padding: 0 6px 0 5px; gap: 4px; font-size: 6px; font-weight: 600; }
.push { margin: 0 3px 0 auto; }
.days { display: flex; gap: 6px; padding: 2px 0 6px 12px; }
.days button { width: 40px; height: 16px; border-radius: 8px; border: 1px solid #f7f7f7; font-size: 9px; font-weight: 600; color: #ccc; }
.days .on { background: #f0f0f0; border-color: #ddd; color: #111; }
.stops { list-style: none; position: relative; }
.stops::before { content: ""; position: absolute; z-index: 1; left: 46px; top: 0; width: 4px; height: 326px; border-radius: 2px; background: #c4c4c4; }
.stops li { height: 65px; }
.stop { height: 56px; display: flex; align-items: center; background: #fafafa; }
.stop.alt { background: #ededed; }
.when { width: 36px; padding-left: 7px; font-size: 6px; line-height: 10px; white-space: nowrap; padding-top: 14px; }
.when b, .when span { display: block; }
.when span { color: #777; }
.rail { position: relative; z-index: 2; width: 24px; height: 55px; display: flex; flex-direction: column; align-items: center; justify-content: center; }
.rail.here { padding-top: 14px; }
.rail em { font: 600 5px/6px Lato, sans-serif; white-space: nowrap; }
.node { width: 12px; height: 12px; border-radius: 50%; background: #b8b8b8; }
.node.here { background: #777; box-shadow: 0 0 4px #777; margin-bottom: 5px; }
.node.dark { background: #4a4a4a; box-shadow: 0 0 4px #777; }
.thumb { width: 49px; height: 49px; border-radius: 7px; background: #e2e2e2; margin-left: 1px; display: flex; align-items: center; justify-content: center; color: #f1f1f1; fill: #e2e2e2; }
.what { margin-left: 7px; flex: 1; font-size: 9px; line-height: 12px; }
.what h2 { font-size: 11px; line-height: 14px; font-weight: 700; }
.pin { position: relative; width: 18px; height: 18px; margin: 0 8px 20px 0; padding-top: 4px; color: #b5b5b5; display: flex; justify-content: center; }
.pin .drop { position: absolute; left: 0; top: 0; width: 18px; height: 18px; }
.pin .s7 { position: relative; color: #222; }
.pin.strong { color: #777; }
.plus { width: 7px; height: 7px; border-radius: 50%; background: #c8c8c8; color: #fff; font-size: 7px; line-height: 7px; margin: 1px 0 0 110px; }
.alarm { position: absolute; z-index: 3; right: 9px; top: 287px; width: 20px; height: 20px; border-radius: 50%; background: #505050; }
.robot { position: absolute; z-index: 3; right: 8px; top: 404px; width: 37px; height: 37px; border-radius: 50%; background: #fff; box-shadow: 0 0 5px #aaa; }

/* garden */
.top { height: 66px; background: #efefef; border-radius: 16px 16px 0 0; padding: 8px 0 0 10px; }
.garden .bar { display: flex; justify-content: space-between; padding-right: 16px; height: 20px; align-items: center; }
.garden .acts { gap: 6px; }
.garden .acts button { width: 15px; height: 15px; background: #868486; }
.garden h1 { font-size: 13px; line-height: 16px; font-weight: 700; margin: 14px 0 0 1px; }
.tabs { height: 25px; background: #d9d9d9; border-bottom: 1px solid #222; display: flex; gap: 16px; justify-content: flex-end; padding: 1px 12px 0 0; font-size: 11px; line-height: 16px; }
.gallery { position: relative; height: 132px; background: #d9d9d9; }
.gallery > svg { position: absolute; left: 95px; top: 59px; color: #e7e5e3; fill: #d9d9d9; }
.arrow { position: absolute; right: 8px; top: 63px; width: 14px; height: 14px; border-radius: 50%; background: #bbb; color: #eee; }
.dots { position: absolute; left: 82px; bottom: 7px; display: flex; gap: 8px; }
.dots i { width: 6px; height: 6px; border-radius: 50%; background: #999; }
.gallery b { position: absolute; right: 8px; bottom: 3px; width: 26px; height: 15px; border-radius: 4px; background: #6b6b6b; color: #eee; font-size: 7px; line-height: 15px; font-weight: 600; text-align: center; }
.facts { background: #efefef; padding: 1px 0 0 74px; font-size: 11px; line-height: 20px; }
.facts p { display: flex; align-items: center; }
.gold { color: #f5a623; margin: 0 3px 0 -4px; }
.links { background: #efefef; display: flex; gap: 4px; padding: 4px 0 8px 66px; border-bottom: 3px solid #e0e0e0; font-size: 9px; font-weight: 600; }
.links button { height: 17px; border-radius: 9px; background: #fff; padding: 0 9px 0 10px; gap: 4px; min-width: 54px; }
.links button:last-child { padding-left: 6px; }
.about { background: #efefef; padding: 2px 0 0 74px; font-size: 10px; line-height: 15px; color: #555; white-space: pre; }
.about h2 { font-size: 12px; line-height: 18px; font-weight: 800; color: #111; margin-left: -2px; }

/* alternate plan */
.alternate .head { height: 36px; padding: 0 11px 0 8px; }
.alternate h1 { flex: 1; text-align: right; font-size: 15px; font-weight: 600; }
.alternate .toggle { margin-left: 14px; }
.alternate .chips { padding: 3px 0 0 8px; gap: 4px; }
.alternate .chip { height: 22px; border-radius: 11px; font-size: 8px; padding: 0 7px 0 6px; gap: 4px; background: #fff; box-shadow: 0 0 2px #ddd; }
.alternate .chip.on { background: #12a98c; }
.alternate h3 { font-size: 8px; line-height: 12px; font-weight: 700; padding: 15px 0 3px 12px; }
.alternate h3.tail { padding: 20px 0 4px 83px; line-height: 11px; }
.alternate .cards { display: flex; gap: 8px; padding-left: 11px; }
.alternate .card { width: 97px; height: 157px; border-radius: 6px; border: 1px solid #c9c9c9; overflow: hidden; flex: none; }
.alternate .photo { height: 119px; background: #c4c4c4; padding-top: 5px; gap: 31px; }
.alternate .photo > svg { color: #dcdad8; fill: #c4c4c4; }
.alternate .card:first-child .photo { gap: 41px; }
.alternate .acts { align-self: flex-end; margin-right: 4px; gap: 3px; }
.alternate .acts button { width: 16px; height: 16px; }
.alternate .info { padding: 4px 3px; }
.alternate .info h2 { font-size: 9px; line-height: 12px; }
.alternate .rate { gap: 1px; font-size: 6px; height: 9px; }
.alternate .rate span { margin-left: 4px; }
.alternate .text { font-size: 7px; line-height: 9px; color: #666; white-space: nowrap; }
.alternate .tail { padding-left: 66px; }
.alternate .rate.tail { color: #333; }
.alternate .card .rate.tail { margin-top: 12px; }
.wide { margin-left: 11px; height: 100px; border: 1px solid #c9c9c9; border-radius: 6px 0 0 6px; border-right: 0; overflow: hidden; }
.alternate .wide .photo { height: 62px; padding-top: 23px; padding-right: 20px; }
.wide .info { padding-top: 14px; }
.alternate .last { margin-top: 14px; }
.last .card:last-child { margin-left: -1px; }

/* chats */
.chats .head { height: 25px; padding: 5px 0 0 7px; gap: 13px; }
.chats .head h1 { flex: 1; font-size: 13px; font-weight: 700; text-align: center; padding-left: 32px; }
.chats .head .plain:last-child { margin-right: 14px; }
.switch { display: grid; grid-template-columns: 1fr 1fr; border-top: 1px solid #f0f0f0; font-size: 8px; }
.switch button { height: 20px; gap: 3px; border-bottom: 2px solid #bbb; color: #bbb; }
.switch .on { color: #111; border-color: #eee; }
.find { display: flex; align-items: center; height: 27px; margin: 3px 4px 7px 10px; border: 1px solid #eee; border-radius: 8px; padding: 0 14px 0 9px; color: #999; gap: 4px; }
.find input { flex: 1; border-left: 1px solid #4a90d9; padding-left: 2px; height: 9px; font-size: 7px; }
.find input::placeholder { color: #999; opacity: 1; }
.group { margin: 0 4px 9px 4px; height: 140px; border-radius: 7px; border: 1px solid #ccc; box-shadow: 0 0 2px #aaa; }
.group header { height: 37px; padding: 2px 0 0 9px; display: flex; align-items: center; gap: 12px; border-bottom: 1px solid #f0f0f0; }
.ring { width: 23px; height: 23px; border-radius: 50%; border: 1px solid #bbb; display: flex; align-items: center; justify-content: center; color: #000; }
.group h2 { font-size: 9px; font-weight: 800; color: #000; }
.row { display: flex; align-items: center; padding: 5px 10px 0 8px; height: 43px; border-bottom: 1px solid #f0f0f0; }
.row + .row { height: 36px; padding: 0 10px 0 8px; }
.face { width: 27px; height: 27px; border-radius: 50%; background: #c8c8c8; border: 1px solid #bbb; box-shadow: inset 0 0 0 1px #fff; position: relative; flex: none; }
.online::after { content: ""; position: absolute; right: 0; bottom: -1px; width: 5px; height: 5px; border-radius: 50%; background: #1fee12; }
.msg { margin: 0 0 4px 9px; flex: 1; font-size: 8px; line-height: 10px; color: #777; white-space: nowrap; }
.row + .row .msg { margin: 3px 0 0 7px; }
.msg h3 { font-size: 8px; line-height: 10px; font-weight: 700; color: #111; }
.meta { font-size: 7px; line-height: 9px; color: #aaa; text-align: right; }
.meta span { display: flex; justify-content: flex-end; align-items: center; gap: 2px; }
.meta b { width: 7px; height: 7px; border-radius: 50%; background: #4c7df0; color: #fff; font-size: 5px; line-height: 7px; text-align: center; }
.group a { display: block; font-size: 7px; line-height: 10px; padding: 7px 0 0 11px; color: #777; text-decoration: underline; }

/* login */
.login .body { padding: 29px 12px 0 11px; }
.logo { width: 44px; height: 43px; background: #c9c9c9; margin: 0 auto; }
.login h1 { font-size: 11px; line-height: 14px; font-weight: 700; text-align: center; margin: 9px -8px 0; color: #000; white-space: nowrap; }
.sub { font-size: 6px; line-height: 8px; text-align: center; color: #333; white-space: nowrap; }
.login label { font-size: 6px; line-height: 8px; color: #333; margin-top: 12px; }
.login label + .box { margin-top: 2px; }
.login .box + label { margin-top: 5px; }
.login .box { height: 22px; border: 1px solid #e8e8e8; border-radius: 7px; display: flex; align-items: center; padding: 0 6px 0 5px; }
.login .box input { flex: 1; font-size: 5px; }
.login .box input::placeholder { color: #666; opacity: 1; }
.login a { align-self: flex-end; font-size: 6px; line-height: 8px; color: #aaa; text-decoration: underline; margin: 3px 0 5px; }
.go { height: 22px; border-radius: 6px; background: #979797; color: #f4f4f4; font-size: 8px; font-weight: 700; }
.or { display: flex; align-items: center; gap: 5px; font-size: 6px; line-height: 10px; color: #666; margin: 7px 0 8px; }
.or::before, .or::after { content: ""; flex: 1; height: 1px; background: #eee; }
.social { display: grid; grid-template-columns: repeat(3, 1fr); gap: 3px; font-size: 6px; font-weight: 600; }
.social button { height: 22px; border: 1px solid #eee; border-radius: 6px; gap: 3px; }
</style>
